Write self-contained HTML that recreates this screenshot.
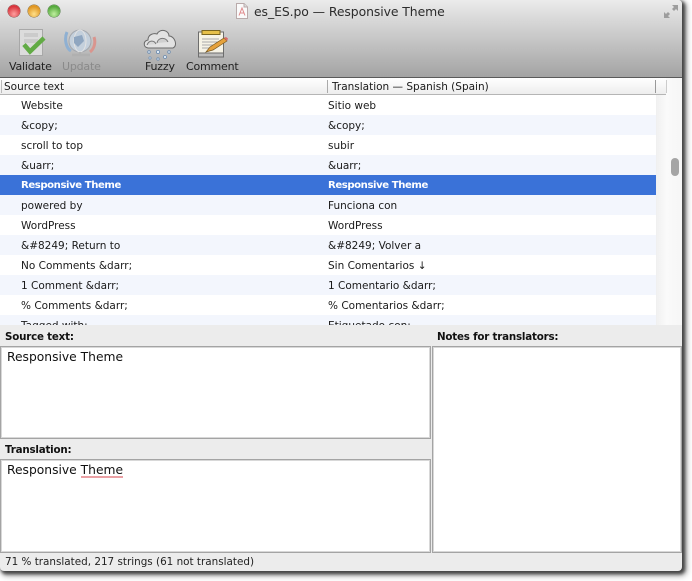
<!DOCTYPE html>
<html><head><meta charset="utf-8">
<style>
html,body{margin:0;padding:0;background:#fff;}
body{width:692px;height:581px;overflow:hidden;position:relative;font-family:"DejaVu Sans","Liberation Sans",sans-serif;color:#1a1a1a;}
.a{position:absolute;white-space:nowrap;}
#win{position:absolute;left:0;top:0;width:682px;height:571px;background:#ececec;box-shadow:2px 2px 3px 1px #444,3px 3px 6px 2px #aaa;border-radius:4px 4px 4px 4px;overflow:hidden;filter:blur(.3px);}
#tb{position:absolute;left:0;top:0;width:682px;height:77px;background:linear-gradient(#ebebeb,#dcdcdc 20%,#a3a3a3 100%);border-bottom:1px solid #5a5a5a;}
.l{font-size:11px;letter-spacing:-.2px;}
.r{position:absolute;left:0;width:656px;height:20px;line-height:22px;font-size:10.5px;}
.r span{position:absolute;white-space:nowrap;}
.r span:first-child{left:21px}
.r span:last-child{left:328px}
.t{background:#f3f6fd}
.s{background:#3a72d8;color:#fff;font-weight:bold;font-size:10.1px;letter-spacing:-.42px;}
.lab{font-weight:bold;font-size:10.3px;color:#111;letter-spacing:-.2px;}
.box{position:absolute;background:#fff;border:1px solid #a4a4a4;box-shadow:inset 0 0 0 1px #d8d8d8;box-sizing:border-box;}
.big{font-size:12.3px;color:#111;}
</style></head><body>
<div id="win">
 <div id="tb"></div>
 <div class="a" style="left:8px;top:5px;width:12px;height:12px;border-radius:50%;background:radial-gradient(circle at 50% 75%,#ffa0a0,#d8343c 70%);box-shadow:0 0 0 .5px #8a4040"></div>
 <div class="a" style="left:28px;top:5px;width:12px;height:12px;border-radius:50%;background:radial-gradient(circle at 50% 75%,#ffe08a,#e09520 70%);box-shadow:0 0 0 .5px #8a6a30"></div>
 <div class="a" style="left:48px;top:5px;width:12px;height:12px;border-radius:50%;background:radial-gradient(circle at 50% 75%,#c0f0a0,#55a93c 70%);box-shadow:0 0 0 .5px #4a7a40"></div>
 <svg class="a" style="left:236px;top:3px" width="12" height="16" viewBox="0 0 12 16"><path d="M.5.5H8L11.500 4V15.500H.5Z" fill="#fafafa" stroke="#b9aaaa"/><path d="M8 .5V4H11.500" fill="#ddd" stroke="#b9aaaa"/><path d="M3 12.500L6 5L9 12.500M4 10H8" fill="none" stroke="#e08a8c"/></svg>
 <div class="a" style="left:254px;top:3px;font-size:12.4px;line-height:17px;color:#2c2c2c;letter-spacing:-.07px">es_ES.po — Responsive Theme</div>
 <svg class="a" style="left:663px;top:4px" width="16" height="15" viewBox="0 0 16 15"><path d="M9 1H15V7L13 5L11 7L9 5L11 3ZM7 14H1V8L3 10L5 8L7 10L5 12Z" fill="#9d9d9d"/></svg>

 <!-- Validate -->
 <svg class="a" style="left:17px;top:28px" width="30" height="32" viewBox="0 0 30 32"><rect x="2.500" y="1.500" width="23" height="26" fill="#dcdcdc" stroke="#a8a8a8"/><rect x="7" y="5" width="14" height="4" fill="#cbcbcb"/><rect x="7" y="11" width="14" height="4" fill="#cbcbcb"/><path d="M7 16.500L13 23.500L27 10" fill="none" stroke="#62ab45" stroke-width="4.500"/></svg>
 <div class="a l" style="left:9px;top:60px;color:#222">Validate</div>
 <!-- Update -->
 <svg class="a" style="left:64px;top:29px" width="34" height="30" viewBox="0 0 34 30"><path d="M3 3C0 10 2 19 7 22" fill="none" stroke="#8fb0d2" stroke-width="3"/><path d="M30 8C32 14 30 20 26 23" fill="none" stroke="#d9958e" stroke-width="3"/><circle cx="16" cy="12" r="11" fill="#c4d0dc" stroke="#a4a8ae"/><ellipse cx="16" cy="12" rx="6" ry="11" fill="none" stroke="#e2e2e2"/><path d="M10 8L18 6L20 12L14 18L10 14Z" fill="#8fa6c0"/><path d="M8 26H26M16 23V26" stroke="#b0b0b0" stroke-width="2.500"/></svg>
 <div class="a l" style="left:62px;top:60px;color:#8a8a8a">Update</div>
 <!-- Fuzzy -->
 <svg class="a" style="left:143px;top:28px" width="34" height="33" viewBox="0 0 34 33"><path d="M5 20C0 19 0 13 5 12C5 6 11 5 14 6C17 0 26 2 26 8C32 8 35 18 30 20Z" fill="#e2e2e2" stroke="#6a6a6a"/><path d="M14 15C15 9 23 9 25 14" fill="#cfcfcf" stroke="#777"/><path d="M4 17C6 12 11 12 13 16" fill="#d8d8d8" stroke="#777"/><g fill="#e4eef8" stroke="#6c8cb0" stroke-width=".8"><circle cx="6" cy="24" r="1.300"/><circle cx="15" cy="24" r="1.600"/><circle cx="26" cy="24" r="1.300"/><circle cx="7" cy="30" r="1.100"/><circle cx="15" cy="31" r="1.200"/><circle cx="22" cy="29" r="1.500"/></g></svg>
 <div class="a l" style="left:145px;top:60px;color:#222">Fuzzy</div>
 <!-- Comment -->
 <svg class="a" style="left:197px;top:29px" width="32" height="31" viewBox="0 0 32 31"><rect x="1.500" y="3" width="25" height="25" fill="#f6f3e6" stroke="#6d6d6d"/><rect x="1.500" y="24" width="25" height="4" fill="#bdbdbd" stroke="#6d6d6d"/><rect x="5" y="1.500" width="18" height="4" fill="#e6c04a" stroke="#7a6520"/><path d="M5 10H22M5 13H22M5 16H16M5 19H13" stroke="#a9a9a9"/><path d="M9 23L13 18L27 9L30 12L16 21Z" fill="#e6a23c" stroke="#7a5a20" stroke-width=".7"/><path d="M27 9L30 12L31 9.500L29 8Z" fill="#d86a6a"/></svg>
 <div class="a l" style="left:186px;top:60px;color:#222">Comment</div>

 <!-- table -->
 <div class="a" style="left:0;top:78px;width:682px;height:247px;background:#fff;overflow:hidden">
  <div class="a" style="left:656px;top:0;width:26px;height:247px;background:linear-gradient(90deg,#f0f0f0,#fafafa 40%,#f6f6f6)"></div>
  <div class="a" style="left:671px;top:80px;width:8px;height:18px;border-radius:4px;background:#a5a5a5"></div>
  <div class="a" style="left:0;top:0;width:666px;height:17px;background:linear-gradient(#fff,#ededed);border-bottom:1px solid #b5b5b5;box-sizing:border-box"></div>
  <div class="a" style="left:1px;top:2px;width:1px;height:13px;background:#bbb"></div>
  <div class="a" style="left:327px;top:2px;width:1px;height:13px;background:#aaa"></div>
  <div class="a" style="left:655px;top:2px;width:1px;height:13px;background:#999"></div>
  <div class="a" style="left:666px;top:2px;width:1px;height:13px;background:#ccc"></div>
  <div class="a" style="left:4px;top:2px;font-size:10.5px;line-height:15px">Source text</div>
  <div class="a" style="left:332px;top:2px;font-size:10.5px;line-height:15px">Translation — Spanish (Spain)</div>
  <div class="r" style="top:17px"><span>Website</span><span>Sitio web</span></div>
  <div class="r t" style="top:37px"><span>&amp;copy;</span><span>&amp;copy;</span></div>
  <div class="r" style="top:57px"><span>scroll to top</span><span>subir</span></div>
  <div class="r t" style="top:77px"><span>&amp;uarr;</span><span>&amp;uarr;</span></div>
  <div class="r s" style="top:97px"><span>Responsive Theme</span><span>Responsive Theme</span></div>
  <div class="r t" style="top:117px"><span>powered by</span><span>Funciona con</span></div>
  <div class="r" style="top:137px"><span>WordPress</span><span>WordPress</span></div>
  <div class="r t" style="top:157px"><span>&amp;#8249; Return to</span><span>&amp;#8249; Volver a</span></div>
  <div class="r" style="top:177px"><span>No Comments &amp;darr;</span><span>Sin Comentarios ↓</span></div>
  <div class="r t" style="top:197px"><span>1 Comment &amp;darr;</span><span>1 Comentario &amp;darr;</span></div>
  <div class="r" style="top:217px"><span>% Comments &amp;darr;</span><span>% Comentarios &amp;darr;</span></div>
  <div class="r t" style="top:237px"><span>Tagged with:</span><span>Etiquetado con:</span></div>
 </div>

 <!-- panes -->
 <div class="a lab" style="left:5px;top:330px;line-height:15px">Source text:</div>
 <div class="a lab" style="left:437px;top:330px;line-height:15px">Notes for translators:</div>
 <div class="box" style="left:0;top:346px;width:431px;height:93px"></div>
 <div class="a big" style="left:7px;top:349px;line-height:17px">Responsive Theme</div>
 <div class="a lab" style="left:5px;top:443px;line-height:15px">Translation:</div>
 <div class="box" style="left:0;top:459px;width:431px;height:94px"></div>
 <div class="a big" style="left:7px;top:462px;line-height:17px">Responsive Theme</div>
 <div class="a" style="left:81px;top:476px;width:42px;height:2px;background:#eaa0a4"></div>
 <div class="box" style="left:432px;top:346px;width:250px;height:207px"></div>
 <div class="a" style="left:5px;top:555px;font-size:10.4px;line-height:15px;color:#222">71 % translated, 217 strings (61 not translated)</div>
</div>
</body></html>
